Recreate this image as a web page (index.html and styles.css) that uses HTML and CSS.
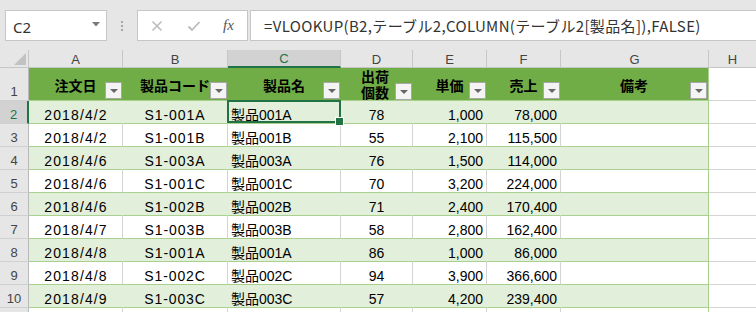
FILE: index.html
```html
<!DOCTYPE html>
<html lang="ja">
<head>
<meta charset="utf-8">
<title>Sheet</title>
<link rel="stylesheet" href="styles.css">
</head>
<body>
<div class="app">
  <div class="fbar">
    <div class="namebox">
      <span class="nb-text">C2</span>
      <svg class="nb-arrow" width="8" height="5" viewBox="0 0 8 5"><path d="M0 0H8L4 4.5Z" fill="#7a7a7a"/></svg>
    </div>
    <div class="dots"><i></i><i></i><i></i></div>
    <div class="fxbox">
      <svg class="ico" width="14" height="14" viewBox="0 0 14 14"><path d="M2.5 2.5L11.5 11.5M11.5 2.5L2.5 11.5" stroke="#bcbcbc" stroke-width="1.6" fill="none"/></svg>
      <svg class="ico" width="14" height="14" viewBox="0 0 14 14"><path d="M1.5 7.5L5 11L12.5 3" stroke="#bcbcbc" stroke-width="1.8" fill="none"/></svg>
      <span class="fx">fx</span>
    </div>
    <div class="formula">=VLOOKUP(B2,テーブル2,COLUMN(テーブル2[製品名]),FALSE)</div>
  </div>

  <div class="sheet">
    <div class="row colhdr">
      <div class="corner"><svg width="12" height="12" viewBox="0 0 12 12"><path d="M12 0V12H0Z" fill="#c2c2c2"/></svg></div>
      <div class="kh">A</div>
      <div class="kh">B</div>
      <div class="kh sel">C</div>
      <div class="kh">D</div>
      <div class="kh">E</div>
      <div class="kh">F</div>
      <div class="kh">G</div>
      <div class="kh last">H</div>
    </div>

    <div class="row thead">
      <div class="rh">1</div>
      <div class="th"><span class="tt">注文日</span><span class="fb"></span></div>
      <div class="th"><span class="tt">製品コード</span><span class="fb"></span></div>
      <div class="th"><span class="tt">製品名</span><span class="fb"></span></div>
      <div class="th"><span class="tt two"><span class="ln">出荷</span><span class="ln">個数</span></span><span class="fb"></span></div>
      <div class="th"><span class="tt">単価</span><span class="fb"></span></div>
      <div class="th"><span class="tt">売上</span><span class="fb"></span></div>
      <div class="th lastcol"><span class="tt">備考</span><span class="fb"></span></div>
      <div class="c ch"></div>
    </div>

    <div class="row band">
      <div class="rh selrow">2</div>
      <div class="c ca date">2018/4/2</div><div class="c ca code">S1-001A</div><div class="c cl cur">製品001A</div><div class="c ca">78</div><div class="c cr">1,000</div><div class="c cr">78,000</div><div class="c lastcol"></div><div class="c ch"></div>
    </div>
    <div class="row">
      <div class="rh">3</div>
      <div class="c ca date">2018/4/2</div><div class="c ca code">S1-001B</div><div class="c cl">製品001B</div><div class="c ca">55</div><div class="c cr">2,100</div><div class="c cr">115,500</div><div class="c lastcol"></div><div class="c ch"></div>
    </div>
    <div class="row band">
      <div class="rh">4</div>
      <div class="c ca date">2018/4/6</div><div class="c ca code">S1-003A</div><div class="c cl">製品003A</div><div class="c ca">76</div><div class="c cr">1,500</div><div class="c cr">114,000</div><div class="c lastcol"></div><div class="c ch"></div>
    </div>
    <div class="row">
      <div class="rh">5</div>
      <div class="c ca date">2018/4/6</div><div class="c ca code">S1-001C</div><div class="c cl">製品001C</div><div class="c ca">70</div><div class="c cr">3,200</div><div class="c cr">224,000</div><div class="c lastcol"></div><div class="c ch"></div>
    </div>
    <div class="row band">
      <div class="rh">6</div>
      <div class="c ca date">2018/4/6</div><div class="c ca code">S1-002B</div><div class="c cl">製品002B</div><div class="c ca">71</div><div class="c cr">2,400</div><div class="c cr">170,400</div><div class="c lastcol"></div><div class="c ch"></div>
    </div>
    <div class="row">
      <div class="rh">7</div>
      <div class="c ca date">2018/4/7</div><div class="c ca code">S1-003B</div><div class="c cl">製品003B</div><div class="c ca">58</div><div class="c cr">2,800</div><div class="c cr">162,400</div><div class="c lastcol"></div><div class="c ch"></div>
    </div>
    <div class="row band">
      <div class="rh">8</div>
      <div class="c ca date">2018/4/8</div><div class="c ca code">S1-001A</div><div class="c cl">製品001A</div><div class="c ca">86</div><div class="c cr">1,000</div><div class="c cr">86,000</div><div class="c lastcol"></div><div class="c ch"></div>
    </div>
    <div class="row">
      <div class="rh">9</div>
      <div class="c ca date">2018/4/8</div><div class="c ca code">S1-002C</div><div class="c cl">製品002C</div><div class="c ca">94</div><div class="c cr">3,900</div><div class="c cr">366,600</div><div class="c lastcol"></div><div class="c ch"></div>
    </div>
    <div class="row band">
      <div class="rh">10</div>
      <div class="c ca date">2018/4/9</div><div class="c ca code">S1-003C</div><div class="c cl">製品003C</div><div class="c ca">57</div><div class="c cr">4,200</div><div class="c cr">239,400</div><div class="c lastcol"></div><div class="c ch"></div>
    </div>
    <div class="row tail">
      <div class="rh"></div>
      <div class="c"></div><div class="c"></div><div class="c"></div><div class="c"></div><div class="c"></div><div class="c"></div><div class="c lastcol"></div><div class="c ch"></div>
    </div>
  </div>
</div>
</body>
</html>
```

FILE: styles.css
```css
* { box-sizing: border-box; }
html, body { margin: 0; padding: 0; }
body {
  background: #e6e6e6;
  font-family: "Liberation Sans", "Noto Sans CJK JP", sans-serif;
  color: #000;
  width: 756px;
  height: 312px;
  overflow: hidden;
}
.app { display: flex; flex-direction: column; }

/* formula bar */
.fbar {
  height: 50px;
  display: flex;
  align-items: flex-start;
  padding: 10px 0 0 5px;
  background: #e6e6e6;
}
.namebox {
  width: 102px;
  height: 31px;
  background: #fff;
  border: 1px solid #c6c6c6;
  display: flex;
  align-items: center;
  justify-content: space-between;
  padding: 0 6px 0 7px;
}
.nb-text {
  font-family: "Noto Sans", "Noto Sans CJK JP", sans-serif;
  font-size: 15px;
  color: #333;
  padding-top: 3px;
}
.nb-arrow { margin-top: -3px; }
.dots {
  width: 30px;
  height: 31px;
  display: flex;
  flex-direction: column;
  align-items: center;
  justify-content: center;
  gap: 2px;
}
.dots i { display: block; width: 2px; height: 2px; background: #a6a6a6; }
.fxbox {
  width: 111px;
  height: 31px;
  background: #fff;
  border: 1px solid #c6c6c6;
  display: flex;
  align-items: center;
  padding-left: 12px;
  gap: 23px;
}
.fx {
  font-family: "Liberation Serif", serif;
  font-style: italic;
  font-size: 15px;
  color: #555;
  margin-left: -1px;
}
.formula {
  flex: 1;
  margin-left: 2px;
  height: 31px;
  background: #fff;
  border: 1px solid #c6c6c6;
  border-right: none;
  padding-left: 13px;
  display: flex;
  align-items: center;
  font-family: "Noto Sans CJK JP", sans-serif;
  font-size: 15px;
  letter-spacing: 0.35px;
  color: #333;
  white-space: nowrap;
}

/* sheet grid */
.sheet {
  display: grid;
  grid-template-columns: 29px 94px 105px 113px 72px 74px 74px 148px 1fr;
  grid-template-rows: 18px 33px repeat(9, 23px) 10px;
  background: #fff;
  height: 262px;
}
.row { display: contents; }

.corner {
  background: #e6e6e6;
  border-right: 1px solid #c6c6c6;
  border-bottom: 1px solid #c6c6c6;
  display: flex;
  align-items: flex-end;
  justify-content: flex-end;
  padding: 0 2px 2px 0;
}
.kh {
  background: #e6e6e6;
  border-right: 1px solid #c6c6c6;
  border-bottom: 1px solid #c6c6c6;
  font-size: 13px;
  color: #444;
  display: flex;
  align-items: center;
  justify-content: center;
  padding-top: 1px;
}
.kh.sel {
  background: #d2d2d2;
  color: #217346;
  border-bottom: 2px solid #217346;
}
.kh.last { border-right: none; }

.rh {
  background: #e6e6e6;
  border-right: 1px solid #b9b9b9;
  border-bottom: 1px solid #d0d0d0;
  font-size: 13px;
  color: #444;
  display: flex;
  align-items: flex-end;
  justify-content: center;
  line-height: 16px;
  padding-bottom: 0;
}
.rh.selrow {
  background: #d2d2d2;
  color: #217346;
  border-right: 2px solid #217346;
}

/* header row */
.th {
  background: #70ad47;
  border-bottom: 1px solid #a9d08e;
  display: grid;
  padding: 0 1px 1px 0;
}
.tt, .fb { grid-area: 1 / 1; }
.tt {
  justify-self: center;
  align-self: center;
  font-family: "Noto Sans CJK JP", sans-serif;
  font-weight: 700;
  font-size: 14px;
  line-height: 16px;
  padding-top: 3px;
  white-space: nowrap;
}
.tt.two {
  justify-self: start;
  margin-left: 20px;
  padding-top: 0;
  display: flex;
  flex-direction: column;
}
.ln { display: block; line-height: 16px; height: 16px; }
.fb {
  justify-self: end;
  align-self: end;
  width: 17px;
  height: 17px;
  border: 1px solid #a8a8a8;
  background: #f4f4f4;
  display: flex;
  align-items: center;
  justify-content: center;
}
.fb::before {
  content: "";
  width: 0;
  height: 0;
  border-left: 4px solid transparent;
  border-right: 4px solid transparent;
  border-top: 4px solid #666;
  margin-top: 1px;
}
.th.lastcol { border-right: 1px solid #a9d08e; }

/* data cells */
.c {
  border-right: 1px solid #d4d4d4;
  border-bottom: 1px solid #a9d08e;
  font-size: 14px;
  line-height: 16px;
  display: flex;
  align-items: flex-end;
  white-space: nowrap;
  background: #fff;
}
.band .c { background: #e2efda; border-right-color: #e2efda; }
.c.lastcol, .band .c.lastcol { border-right-color: #a9d08e; }
.c.ch, .band .c.ch { background: #fff; border-right: none; border-bottom-color: #d4d4d4; }
.ca { justify-content: center; }
.cl { justify-content: flex-start; padding-left: 3px; }
.cr { justify-content: flex-end; padding-right: 3px; }
.date { letter-spacing: 1.1px; padding-left: 1px; }
.code { letter-spacing: 0.9px; }

.tail .c { border-bottom: none; }
.tail .rh { border-bottom: none; }

/* active cell */
.cur { position: relative; }
.cur::after {
  content: "";
  position: absolute;
  left: -1px;
  top: -1px;
  right: -1px;
  bottom: 0;
  border: 2px solid #217346;
}
.cur::before {
  content: "";
  position: absolute;
  right: -4px;
  bottom: -3px;
  width: 7px;
  height: 7px;
  background: #217346;
  border: 1px solid #fff;
  z-index: 2;
}
```
